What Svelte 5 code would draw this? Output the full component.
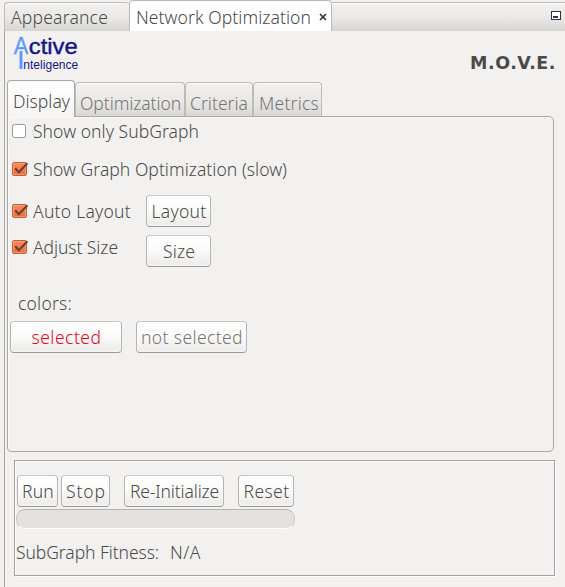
<script>
  // Tunes letter spacing so a label occupies its designed width.
  function fit(node, width) {
    const natural = node.getBoundingClientRect().width;
    const gap = (width - natural) / node.textContent.length;
    node.style.letterSpacing = `${gap}px`;
  }

  const tabs = [
    { name: 'Display', w: 68, text: 57, active: true },
    { name: 'Optimization', w: 110, text: 101 },
    { name: 'Criteria', w: 68, text: 58 },
    { name: 'Metrics', w: 69, text: 60 }
  ];
</script>

{#snippet label(text, width)}<span class="label" use:fit={width}>{text}</span>{/snippet}

{#snippet check(on)}
  <svg class="check" width="17" height="16" viewBox="0 0 17 16">
    {#if on}
      <rect x="0.5" y="1.5" width="14" height="13" rx="1.5" fill="url(#orange)" stroke="#c2603b" />
      <rect x="1.5" y="2.5" width="12" height="11" rx="0.5" fill="none" stroke="#ffa684" stroke-opacity="0.6" />
      <path d="M3.2 7.2 L6.8 11.2 L15.4 2.2" fill="none" stroke="#6b4032" stroke-width="2.1" />
    {:else}
      <rect x="0.5" y="0.5" width="13" height="13" rx="2" fill="#fff" stroke="#999795" />
    {/if}
  </svg>
{/snippet}

<svg class="defs" width="0" height="0">
  <linearGradient id="orange" x1="0" y1="0" x2="0" y2="1">
    <stop offset="0" stop-color="#ff8b62" />
    <stop offset="1" stop-color="#e6693d" />
  </linearGradient>
</svg>

<div class="window">
  <div class="topbar">
    <div class="doc">{@render label('Appearance', 97)}</div>
    <div class="doc current">
      {@render label('Network Optimization', 175)}
      <svg class="close" width="8" height="8" viewBox="0 0 8 8"><path d="M1 1 L7 7 M7 1 L1 7" stroke="#34343a" stroke-width="1.7" /></svg>
    </div>
    <div class="filler">
      <svg width="10" height="9" viewBox="0 0 10 9"><rect x="0.5" y="0.5" width="9" height="8" fill="#fff" stroke="#34343e" /><rect x="2" y="5" width="5" height="2" fill="#34343e" /></svg>
    </div>
  </div>

  <div class="body">
    <header>
      <svg class="logo" width="70" height="40" viewBox="0 0 70 40">
        <text x="0.8" y="23" font-size="24" textLength="14.5" lengthAdjust="spacingAndGlyphs" fill="#5b9bff" stroke="#5b9bff" stroke-width="0.3">A</text>
        <text x="15.8" y="23" font-size="22" textLength="49" lengthAdjust="spacingAndGlyphs" fill="#141489" stroke="#141489" stroke-width="0.4">ctive</text>
        <rect x="6.5" y="20" width="3" height="18" fill="#5b9bff" />
        <text x="10.3" y="38" font-size="12.5" textLength="55" lengthAdjust="spacingAndGlyphs" fill="#141489">nteligence</text>
      </svg>
      <span class="brand" use:fit={86}>M.O.V.E.</span>
    </header>

    <nav>
      {#each tabs as tab}
        <div class="tab" class:active={tab.active} style:width="{tab.w}px">{@render label(tab.name, tab.text)}</div>
      {/each}
    </nav>

    <section class="pane">
      <div class="row only">{@render check(false)}{@render label('Show only SubGraph', 166)}</div>
      <div class="row graph">{@render check(true)}{@render label('Show Graph Optimization (slow)', 254)}</div>
      <div class="row auto">
        <div class="option">{@render check(true)}{@render label('Auto Layout', 98)}</div>
        <button class="side">{@render label('Layout', 55)}</button>
      </div>
      <div class="row adjust">
        <div class="option">{@render check(true)}{@render label('Adjust Size', 85)}</div>
        <button class="side">{@render label('Size', 32)}</button>
      </div>
      <div class="colors">{@render label('colors:', 54)}</div>
      <div class="swatches">
        <button class="selected">{@render label('selected', 70)}</button>
        <button class="unselected">{@render label('not selected', 102)}</button>
      </div>
    </section>

    <section class="runner">
      <div class="actions">
        <button class="run">{@render label('Run', 32)}</button>
        <button class="stop">{@render label('Stop', 40)}</button>
        <button class="init">{@render label('Re-Initialize', 89)}</button>
        <button class="reset">{@render label('Reset', 46)}</button>
      </div>
      <div class="progress"></div>
      <div class="fitness">{@render label('SubGraph Fitness:', 143)}{@render label('N/A', 31)}</div>
    </section>
  </div>
</div>

<style>
  .defs { position: absolute; }
  .window {
    box-sizing: border-box;
    width: 565px;
    height: 587px;
    overflow: hidden;
    background: #f2f1ef;
    color: #4a4a4a;
    font: 300 17.5px/20px 'Noto Sans', 'Open Sans', sans-serif;
    display: flex;
    flex-direction: column;
  }
  .window * { box-sizing: border-box; }
  .label { white-space: pre; flex: none; }

  .topbar { height: 31px; padding-left: 4px; display: flex; align-items: flex-end; }
  .doc, .filler {
    height: 29px;
    border-top: 1px solid #bdbbb7;
    background: linear-gradient(#f2f1ef 0%, #e9e8e6 55%, #d7d5d1 100%);
    box-shadow: inset 0 1px #faf9f8;
  }
  .doc {
    width: 125px;
    padding: 4px 0 0 6px;
    border-left: 1px solid #bdbbb7;
    border-radius: 4px 4px 0 0;
    display: flex;
  }
  .doc.current {
    width: 203px;
    height: 31px;
    padding-top: 6px;
    padding-left: 6px;
    border-right: 1px solid #bdbbb7;
    background: #fff;
  }
  .close { margin: 6px 0 0 8px; flex: none; }
  .filler { flex: 1; display: flex; justify-content: flex-end; padding: 8px 4px 0 0; }

  .body {
    flex: 1;
    margin-left: 4px;
    border-left: 1px solid #a9a7a3;
    padding-left: 2px;
    display: flex;
    flex-direction: column;
  }
  header { height: 49px; display: flex; justify-content: space-between; padding: 0 9px 0 6px; }
  .logo { overflow: visible; font-family: 'Liberation Sans', Arial, sans-serif; font-weight: 400; }
  .brand { font: bold 17.5px/20px 'DejaVu Sans', sans-serif; color: #4a4a4a; margin-top: 22px; white-space: pre; }

  nav { height: 36px; display: flex; align-items: flex-end; }
  .tab {
    height: 34px;
    padding: 10px 0 0 4px;
    color: #777573;
    border: 1px solid #bdbbb7;
    border-bottom: 0;
    border-radius: 4px 4px 0 0;
    background: linear-gradient(#f1f0ee, #e9e8e6 55%, #d9d7d3);
    box-shadow: inset 0 1px #f9f8f7;
  }
  .tab:last-child { padding-left: 5px; }
  .tab.active {
    height: 37px;
    margin-bottom: -1px;
    padding: 10px 0 0 5px;
    position: relative;
    z-index: 1;
    color: #4a4a4a;
    border-color: #aaa8a4;
    background: linear-gradient(#fff, #f5f4f3);
  }

  .pane {
    width: 547px;
    height: 336px;
    border: 1px solid #aaa8a4;
    border-radius: 0 5px 5px 4px;
    box-shadow: inset 1px 1px #fbfaf9;
    padding-left: 4px;
    display: flex;
    flex-direction: column;
  }
  .row { display: flex; flex: none; }
  .check { flex: none; margin: 2px 4px 0 0; }
  .only .check { margin-top: 3px; }
  .only { height: 20px; margin-top: 4px; }
  .graph { height: 20px; margin-top: 18px; }
  .auto { height: 32px; margin-top: 16px; }
  .adjust { height: 32px; margin-top: 8px; }
  .option { display: flex; width: 134px; padding-top: 6px; }
  .adjust .option { padding-top: 2px; }

  button {
    appearance: none;
    height: 32px;
    margin: 0;
    padding: 0 0 1px 1px;
    border: 1px solid #b6b4b1;
    border-top-color: #cac8c5;
    border-bottom-color: #9c9a97;
    border-radius: 4px;
    background: linear-gradient(#fff, #fbfbfa 45%, #eeedeb 90%, #f4f3f2);
    box-shadow: inset 0 0 2px #fff;
    color: #4a4a4a;
    font: inherit;
    display: flex;
    justify-content: center;
    align-items: center;
    flex: none;
  }
  .side { width: 65px; }
  .colors { margin: 26px 0 0 6px; height: 20px; }
  .swatches { display: flex; gap: 14px; margin: 8px 0 0 -2px; }
  .selected { width: 112px; color: #f00018; }
  .unselected { width: 111px; color: #777573; }

  .runner {
    width: 541px;
    height: 116px;
    margin: 8px 0 0 7px;
    border: 1px solid #a3a19f;
    box-shadow: 1px 1px #fff, inset 1px 1px #fff;
    padding: 14px 0 0 1px;
  }
  .actions { display: flex; padding-left: 1px; }
  .run { width: 41px; }
  .stop { width: 49px; margin-left: 3px; }
  .init { width: 100px; margin-left: 14px; }
  .reset { width: 56px; margin-left: 14px; }
  .progress {
    width: 279px;
    height: 20px;
    margin-top: 2px;
    border: 1px solid #cbc9c6;
    border-top-color: #b5b3b0;
    border-bottom-color: #fff;
    border-radius: 9px;
    background: #e3e2e0;
  }
  .fitness { display: flex; gap: 11px; margin-top: 13px; }
</style>
